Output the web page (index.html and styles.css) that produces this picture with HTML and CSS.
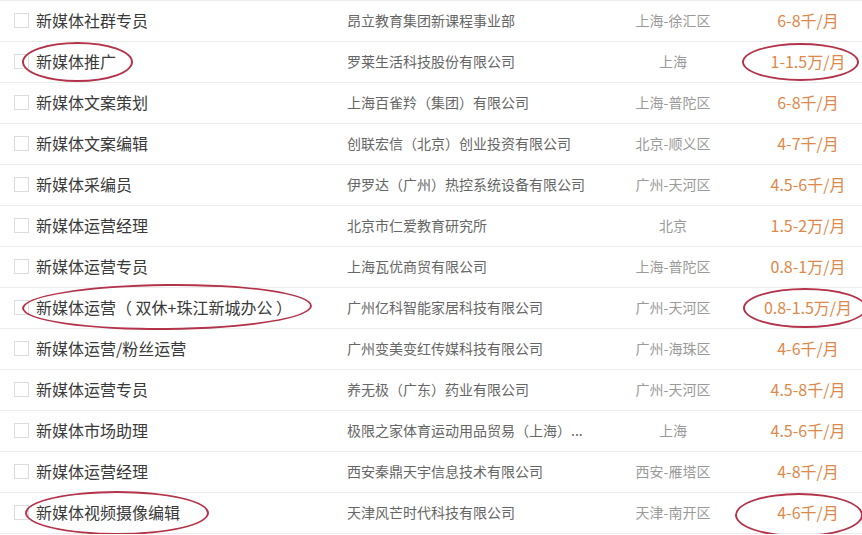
FILE: index.html
```html
<!DOCTYPE html>
<html lang="zh-CN">
<head>
  <meta charset="UTF-8">
  <title>新媒体职位列表</title>
  <link rel="stylesheet" href="styles.css">
</head>
<body>
  <ul class="job-list">
    <li class="job">
      <span class="check"></span>
      <span class="title">新媒体社群专员</span>
      <span class="company">昂立教育集团新课程事业部</span>
      <span class="city">上海-徐汇区</span>
      <span class="salary">6-8千/月</span>
    </li>
    <li class="job">
      <span class="check"></span>
      <span class="title">新媒体推广</span>
      <span class="company">罗莱生活科技股份有限公司</span>
      <span class="city">上海</span>
      <span class="salary">1-1.5万/月</span>
      <i class="ring ring-t2"></i>
      <i class="ring ring-s2"></i>
    </li>
    <li class="job">
      <span class="check"></span>
      <span class="title">新媒体文案策划</span>
      <span class="company">上海百雀羚（集团）有限公司</span>
      <span class="city">上海-普陀区</span>
      <span class="salary">6-8千/月</span>
    </li>
    <li class="job">
      <span class="check"></span>
      <span class="title">新媒体文案编辑</span>
      <span class="company">创联宏信（北京）创业投资有限公司</span>
      <span class="city">北京-顺义区</span>
      <span class="salary">4-7千/月</span>
    </li>
    <li class="job">
      <span class="check"></span>
      <span class="title">新媒体采编员</span>
      <span class="company">伊罗达（广州）热控系统设备有限公司</span>
      <span class="city">广州-天河区</span>
      <span class="salary">4.5-6千/月</span>
    </li>
    <li class="job">
      <span class="check"></span>
      <span class="title">新媒体运营经理</span>
      <span class="company">北京市仁爱教育研究所</span>
      <span class="city">北京</span>
      <span class="salary">1.5-2万/月</span>
    </li>
    <li class="job">
      <span class="check"></span>
      <span class="title">新媒体运营专员</span>
      <span class="company">上海瓦优商贸有限公司</span>
      <span class="city">上海-普陀区</span>
      <span class="salary">0.8-1万/月</span>
    </li>
    <li class="job">
      <span class="check"></span>
      <span class="title">新媒体运营（ 双休+珠江新城办公 ）</span>
      <span class="company">广州亿科智能家居科技有限公司</span>
      <span class="city">广州-天河区</span>
      <span class="salary">0.8-1.5万/月</span>
      <i class="ring ring-t8"></i>
      <i class="ring ring-s8"></i>
    </li>
    <li class="job">
      <span class="check"></span>
      <span class="title">新媒体运营/粉丝运营</span>
      <span class="company">广州变美变红传媒科技有限公司</span>
      <span class="city">广州-海珠区</span>
      <span class="salary">4-6千/月</span>
    </li>
    <li class="job">
      <span class="check"></span>
      <span class="title">新媒体运营专员</span>
      <span class="company">养无极（广东）药业有限公司</span>
      <span class="city">广州-天河区</span>
      <span class="salary">4.5-8千/月</span>
    </li>
    <li class="job">
      <span class="check"></span>
      <span class="title">新媒体市场助理</span>
      <span class="company">极限之家体育运动用品贸易（上海）...</span>
      <span class="city">上海</span>
      <span class="salary">4.5-6千/月</span>
    </li>
    <li class="job">
      <span class="check"></span>
      <span class="title">新媒体运营经理</span>
      <span class="company">西安秦鼎天宇信息技术有限公司</span>
      <span class="city">西安-雁塔区</span>
      <span class="salary">4-8千/月</span>
    </li>
    <li class="job">
      <span class="check"></span>
      <span class="title">新媒体视频摄像编辑</span>
      <span class="company">天津风芒时代科技有限公司</span>
      <span class="city">天津-南开区</span>
      <span class="salary">4-6千/月</span>
      <i class="ring ring-t13"></i>
      <i class="ring ring-s13"></i>
    </li>
  </ul>
</body>
</html>
```

FILE: styles.css
```css
body {
  margin: 0;
  background: #fff;
  font-family: "Noto Sans CJK SC", "Microsoft YaHei", sans-serif;
  overflow: hidden;
}
.job-list {
  list-style: none;
  margin: 0;
  padding: 0;
  border-top: 1px solid #ececec;
}
.job {
  position: relative;
  display: grid;
  grid-template-columns: 22px 311px 273px 106px 1fr;
  align-items: center;
  height: 40px;
  padding-left: 14px;
  border-bottom: 1px solid #ececec;
}
.check {
  width: 13px;
  height: 13px;
  margin-top: -1px;
  border: 1px solid #dcdcdc;
  background: #fff;
}
.title {
  margin-top: -2px;
  font-size: 16px;
  color: #3a3a3a;
  white-space: nowrap;
}
.company {
  margin-top: -2px;
  font-size: 14px;
  color: #666;
  white-space: nowrap;
}
.city {
  margin-top: -2px;
  font-size: 14px;
  color: #9a9a9a;
  text-align: center;
  white-space: nowrap;
}
.salary {
  margin-top: -2px;
  padding-left: 28px;
  font-size: 16px;
  color: #de8849;
  text-align: center;
  white-space: nowrap;
}
.ring {
  position: absolute;
  border: 2px solid #b3344a;
  border-radius: 50%;
  box-sizing: border-box;
}
.ring-t2 { left: 22px; top: 0; width: 111px; height: 40px; }
.ring-s2 { left: 742px; top: 1px; width: 117px; height: 38px; }
.ring-t8 { left: 22px; top: -4px; width: 290px; height: 46px; transform: rotate(-0.5deg); }
.ring-s8 { left: 743px; top: 0; width: 124px; height: 40px; }
.ring-t13 { left: 25px; top: -2px; width: 184px; height: 44px; }
.ring-s13 { left: 735px; top: 0; width: 128px; height: 44px; }
```
